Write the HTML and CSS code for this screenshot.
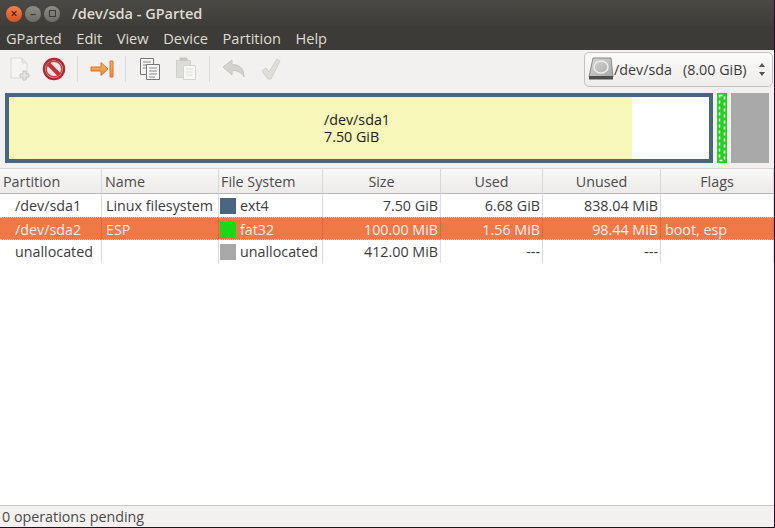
FILE: index.html
```html
<!DOCTYPE html>
<html lang="en">
<head>
<meta charset="utf-8">
<title>/dev/sda - GParted</title>
<link rel="stylesheet" href="styles.css">
</head>
<body>
<div class="window">
  <header class="titlebar">
    <div class="win-buttons">
      <span class="win-btn close">×</span>
      <span class="win-btn">–</span>
      <span class="win-btn"><i class="square"></i></span>
    </div>
    <span class="title">/dev/sda - GParted</span>
  </header>
  <nav class="menubar">
    <span>GParted</span><span>Edit</span><span>View</span><span>Device</span><span>Partition</span><span>Help</span>
  </nav>
  <div class="toolbar">
    <div class="tools">
      <span class="tool"><svg width="24" height="26" viewBox="0 0 24 26"><path d="M3 2h11l5 5v15H3z" fill="#f4f4f2" stroke="#d8d8d6"/><path d="M14 2v5h5" fill="#e6e6e4" stroke="#d8d8d6"/><path d="M15 15h3v3h3v3h-3v3h-3v-3h-3v-3h3z" fill="#e4e4e2" stroke="#c4c4c2"/></svg></span>
      <span class="tool"><svg width="24" height="24" viewBox="0 0 24 24"><circle cx="12" cy="12" r="10" fill="#f0e8e8" stroke="#a82a32" stroke-width="2.4"/><circle cx="12" cy="12" r="7.8" fill="none" stroke="#c8383c" stroke-width="1.4"/><path d="M6 6.500 17.500 18" stroke="#c4323a" stroke-width="4"/></svg></span>
    </div>
    <i class="sep"></i>
    <div class="tools">
      <span class="tool"><svg width="24" height="20" viewBox="0 0 24 20"><defs><linearGradient id="arrow" x1="0" y1="0" x2="0" y2="1"><stop offset="0" stop-color="#f8b878"/><stop offset="1" stop-color="#ec8436"/></linearGradient></defs><path d="M1 8h10V3.500L18 10l-7 6.500V12H1z" fill="url(#arrow)" stroke="#d9732a"/><path d="M20 2h3v16h-3z" fill="url(#arrow)" stroke="#d9732a"/></svg></span>
    </div>
    <i class="sep"></i>
    <div class="tools wide">
      <span class="tool"><svg width="22" height="24" viewBox="0 0 22 24"><path d="M1.500 1.500h13v16h-13z" fill="#f4f4f4" stroke="#777"/><path d="M4 5h8M4 8h8M4 11h8" stroke="#888"/><path d="M7.500 7.500h13v15h-13z" fill="#f7f7f7" stroke="#777"/><path d="M10 11h8M10 14h8M10 17h8M10 20h6" stroke="#888"/></svg></span>
      <span class="tool"><svg width="22" height="24" viewBox="0 0 22 24"><path d="M1.500 3.500h14v17h-14z" fill="#dcdcd8" stroke="#cfcfcb"/><path d="M5 3h7V1h-7z" fill="#c8c8c4" stroke="#c4c4c0"/><path d="M8.500 8.500h12v14h-12z" fill="#f8f8f6" stroke="#d4d4d0"/><path d="M11 12h7M11 15h7M11 18h7" stroke="#dcdcd8"/></svg></span>
    </div>
    <i class="sep"></i>
    <div class="tools wider">
      <span class="tool"><svg width="24" height="20" viewBox="0 0 24 20"><path d="M1 8 10 1v4.500c7 0 12 3 12 12.500-2-4-6-6.500-12-6.500V16z" fill="#d2d2ce" stroke="#c6c6c2"/></svg></span>
      <span class="tool"><svg width="22" height="24" viewBox="0 0 22 24"><path d="M2 14l4-3 3 4L17 2l3 2-9 18H8z" fill="#dededa" stroke="#cfcfcb"/></svg></span>
    </div>
    <div class="device-select">
      <svg width="26" height="24" viewBox="0 0 26 24"><defs><linearGradient id="disk" x1="0" y1="0" x2="1" y2="1"><stop offset="0" stop-color="#d8d8d6"/><stop offset="1" stop-color="#a8a8a6"/></linearGradient></defs><path d="M5 1h18l2 19H1z" fill="url(#disk)" stroke="#8a8a88"/><ellipse cx="13" cy="10" rx="7" ry="6" fill="none" stroke="#eeeeec" stroke-width="1.500"/><path d="M1 19h24v3.500H1z" fill="#4e4e4c"/></svg>
      <span class="dev-name">/dev/sda</span>
      <span class="dev-size">(8.00 GiB)</span>
      <span class="updown"><i class="up"></i><i class="down"></i></span>
    </div>
  </div>
  <div class="partmap">
    <div class="seg-main">
      <div class="seg-label">/dev/sda1<br>7.50 GiB</div>
    </div>
    <div class="seg-esp"><svg width="10" height="70" viewBox="0 0 10 70"><rect x="2.500" y="2.500" width="5" height="65" fill="none" stroke="#fff" stroke-width="1.500" stroke-dasharray="3 3"/></svg></div>
    <div class="seg-free"></div>
  </div>
  <div class="table">
    <div class="head">Partition</div><div class="head left">Name</div><div class="head left fs-head">File System</div><div class="head">Size</div><div class="head">Used</div><div class="head">Unused</div><div class="head">Flags</div>

    <div class="cell dev">/dev/sda1</div><div class="cell">Linux filesystem</div><div class="cell fs"><i class="swatch ext4"></i>ext4</div><div class="cell num">7.50 GiB</div><div class="cell num">6.68 GiB</div><div class="cell num">838.04 MiB</div><div class="cell"></div>

    <div class="cell dev sel">/dev/sda2</div><div class="cell sel">ESP</div><div class="cell fs sel"><i class="swatch fat32"></i>fat32</div><div class="cell num sel">100.00 MiB</div><div class="cell num sel">1.56 MiB</div><div class="cell num sel">98.44 MiB</div><div class="cell sel">boot, esp</div>

    <div class="cell dev">unallocated</div><div class="cell"></div><div class="cell fs"><i class="swatch unalloc"></i>unallocated</div><div class="cell num">412.00 MiB</div><div class="cell num">---</div><div class="cell num">---</div><div class="cell"></div>
  </div>
  <footer class="status">0 operations pending</footer>
</div>
</body>
</html>
```

FILE: styles.css
```css
* { box-sizing: border-box; }
html, body { margin: 0; height: 100%; }
body {
  background: #2c0a24;
  overflow: hidden;
  font-family: "Open Sans", "Noto Sans", sans-serif;
  font-size: 14.3px;
  color: #3c3c3c;
}
.window {
  width: 774px;
  height: 527px;
  display: flex;
  flex-direction: column;
  background: #fff;
}
.titlebar {
  height: 26px;
  display: flex;
  align-items: center;
  padding: 1px 0 0 6px;
  background: linear-gradient(#4a4944, #3e3d39);
  color: #dfdbd2;
  font-size: 14.5px;
  font-weight: 600;
}
.win-buttons { display: flex; gap: 3px; width: 66px; }
.win-btn {
  width: 16px;
  height: 16px;
  border-radius: 50%;
  background: linear-gradient(#8d8c85, #6c6b65);
  color: #3c3b37;
  font-size: 12px;
  line-height: 15px;
  text-align: center;
  display: flex;
  align-items: center;
  justify-content: center;
}
.win-btn.close { background: linear-gradient(#f08050, #d9501e); color: #4a2010; }
.square { width: 7px; height: 7px; border: 1px solid #3c3b37; display: block; }
.menubar {
  height: 24px;
  display: flex;
  gap: 14.5px;
  align-items: center;
  padding: 0 0 0 6px;
  background: #3c3b37;
  color: #dfdbd2;
  font-size: 14.6px;
}
.toolbar {
  height: 38px;
  display: flex;
  align-items: center;
  padding: 0 1px 0 3px;
  background: #f2f1f0;
}
.tools { display: flex; }
.tools.wide { gap: 2px; }
.tools.wider { gap: 3px; }
.tool { width: 34px; height: 30px; display: flex; align-items: center; justify-content: center; }
.sep { width: 1px; height: 26px; margin: 0 7px 0 6px; background: #dcdbd9; }
.device-select {
  margin-left: auto;
  width: 189px;
  height: 35px;
  display: flex;
  align-items: center;
  padding-left: 3px;
  border: 1px solid #c4c3c1;
  border-radius: 5px;
  background: linear-gradient(#fafaf9, #eeedec);
}
.dev-name { margin-left: 0; }
.dev-size { margin-left: 11px; }
.updown { margin-left: auto; margin-right: 7px; display: flex; flex-direction: column; gap: 5px; }
.up, .down { display: block; width: 0; height: 0; border-left: 3px solid transparent; border-right: 3px solid transparent; }
.up { border-bottom: 4px solid #555; }
.down { border-top: 4px solid #555; }
.partmap {
  height: 81px;
  display: flex;
  padding: 5px 5px 6px 5px;
  background: #f2f1f0;
  border-bottom: 1px solid #d8d7d5;
}
.seg-main {
  width: 708px;
  height: 70px;
  border: 4px solid #4a6580;
  background: linear-gradient(to right, #f6f7b8 623px, #fff 623px);
  display: flex;
  align-items: center;
  justify-content: center;
  padding-right: 4px;
}
.seg-label { line-height: 17px; color: #222; }
.seg-esp {
  width: 10px;
  height: 70px;
  margin-left: 4px;
  background: #22d022;
}
.seg-esp svg { display: block; }
.seg-free {
  width: 38px;
  height: 70px;
  margin-left: 4px;
  background: #a9a9a9;
}
.table {
  display: grid;
  grid-template-columns: 102px 117px 104px 118px 102px 118px 113px;
  grid-template-rows: 25px 23px 23px 23px;
}
.head {
  display: flex;
  align-items: center;
  justify-content: center;
  background: linear-gradient(#f8f8f7, #ecebea);
  border-right: 1px solid #d8d7d5;
  border-bottom: 1px solid #b8b7b5;
  color: #4c4c4c;
}
.head:first-child { justify-content: flex-start; padding-left: 3px; }
.head.left { justify-content: flex-start; padding-left: 3px; }
.head.fs-head { padding-left: 2px; }
.cell {
  display: flex;
  align-items: center;
  padding: 0 3px 0 4px;
  border-right: 1px solid #dcdcdc;
  white-space: nowrap;
  overflow: hidden;
}
.dev { padding-left: 15px; }
.num { justify-content: flex-end; padding-right: 2px; }
.fs { padding-left: 1px; }
.sel {
  padding-top: 2px;
  background: #f07746;
  color: #fdf0ea;
  border-top: 1px dotted #f8c0a6;
  border-bottom: 1px dotted #f8c0a6;
  border-right-color: #d96a3c;
}
.swatch { width: 16px; height: 16px; margin-right: 4px; flex: none; }
.ext4 { background: #4a6580; }
.fat32 { background: #18d818; }
.unalloc { background: #a9a9a9; }
.status {
  margin-top: auto;
  height: 22px;
  display: flex;
  align-items: center;
  padding: 0 0 0 2px;
  background: #f2f1f0;
  border-top: 1px solid #c8c7c5;
  color: #4c4c4c;
}
```
